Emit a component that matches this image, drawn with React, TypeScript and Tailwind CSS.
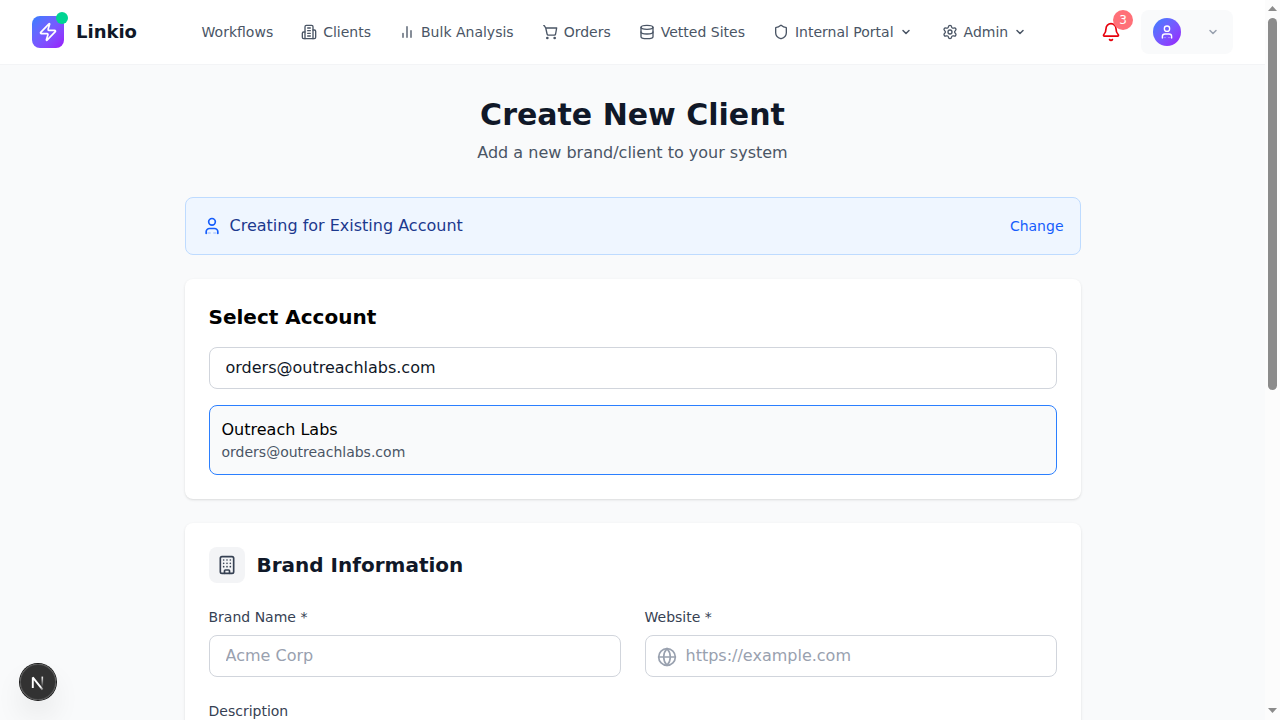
import type { ReactNode } from 'react';
import { Bell, Building, ChevronDown, Database, Globe, Settings, Shield, Zap } from 'lucide-react';

function Glyph({ children, size = 16, className = '' }: { children: ReactNode; size?: number; className?: string }) {
  return (
    <svg width={size} height={size} viewBox="0 0 24 24" fill="none" stroke="currentColor" strokeWidth="2" strokeLinecap="round" strokeLinejoin="round" className={className}>
      {children}
    </svg>
  );
}

const OfficeIcon = () => (
  <Glyph>
    <path d="M6 22V4a2 2 0 0 1 2-2h8a2 2 0 0 1 2 2v18Z" />
    <path d="M6 12H4a2 2 0 0 0-2 2v6a2 2 0 0 0 2 2h2" />
    <path d="M18 9h2a2 2 0 0 1 2 2v9a2 2 0 0 1-2 2h-2" />
    <path d="M10 6h4M10 10h4M10 14h4M10 18h4" />
  </Glyph>
);

const BarsIcon = () => (
  <Glyph>
    <path d="M18 20V10M12 20V4M6 20v-6" />
  </Glyph>
);

const CartIcon = () => (
  <Glyph>
    <circle cx="8" cy="21" r="1" />
    <circle cx="19" cy="21" r="1" />
    <path d="M2.6 2.4h.8L5.6 6l2 9a2 2 0 0 0 2 1.6h8.8a2 2 0 0 0 2-1.6L22 6H6" />
  </Glyph>
);

function PersonIcon({ size, className }: { size: number; className?: string }) {
  return (
    <Glyph size={size} className={className}>
      <path d="M19 21v-2a4 4 0 0 0-4-4H9a4 4 0 0 0-4 4v2" />
      <path d="M7 20.4h3M14 20.4h3" strokeWidth="1.2" opacity="0.4" />
      <circle cx="12" cy="7" r="4" />
    </Glyph>
  );
}

function NavItem({ icon, label, menu }: { icon?: ReactNode; label: string; menu?: boolean }) {
  return (
    <a className="flex items-center gap-1.5 whitespace-nowrap rounded-lg px-3 py-2 text-sm font-medium text-gray-600">
      {icon}
      {label}
      {menu && <ChevronDown size={12} strokeWidth={3} className="mr-0.5" />}
    </a>
  );
}

function Header() {
  return (
    <header className="flex h-[65px] items-center border-b border-gray-100 bg-white px-8">
      <div className="flex w-[157.6px] items-center gap-3">
        <div className="relative flex size-8 items-center justify-center rounded-lg bg-gradient-to-br from-blue-500 to-purple-600">
          <Zap size={20} className="text-white" />
          <span className="absolute -right-1 -top-1 size-3 rounded-full bg-[#00d492]" />
        </div>
        <span className="text-lg font-bold text-gray-900">Linkio</span>
      </div>
      <nav className="flex items-center gap-1">
        <NavItem label="Workflows" />
        <NavItem label="Clients" icon={<OfficeIcon />} />
        <NavItem label="Bulk Analysis" icon={<BarsIcon />} />
        <NavItem label="Orders" icon={<CartIcon />} />
        <NavItem label="Vetted Sites" icon={<Database size={16} />} />
        <NavItem label="Internal Portal" icon={<Shield size={16} />} menu />
        <NavItem label="Admin" icon={<Settings size={16} />} menu />
      </nav>
      <div className="ml-auto flex items-center gap-5">
        <button className="relative text-red-600">
          <Bell size={20} />
          <span className="absolute -right-3 -top-3 flex size-5 items-center justify-center rounded-full bg-[#ff7078] text-xs font-medium text-white">3</span>
        </button>
        <button className="flex h-11 w-[92px] items-center justify-between rounded-lg bg-gray-50 px-3">
          <span className="flex size-7 items-center justify-center rounded-full bg-gradient-to-br from-blue-500 to-purple-600 text-white">
            <PersonIcon size={16} />
          </span>
          <ChevronDown size={12} strokeWidth={3} className="mr-0.5 text-gray-400" />
        </button>
      </div>
    </header>
  );
}

const field = 'h-[42px] w-full rounded-lg border border-gray-300 bg-white pb-0.5 text-base text-gray-900 outline-none placeholder:text-gray-400';

export default function App() {
  return (
    <div className="flex h-[720px] overflow-hidden bg-gray-50 font-['DejaVu_Sans',sans-serif] text-black">
      <div className="h-[720px] w-[1265px] shrink-0 overflow-hidden">
        <Header />
        <main className="mx-auto w-[896px] pt-8">
          <div className="mb-8 text-center">
            <h1 className="mb-2 text-3xl font-bold text-gray-900">Create New Client</h1>
            <p className="text-gray-600">Add a new brand/client to your system</p>
          </div>

          <div className="mb-6 flex items-center justify-between rounded-lg border border-blue-200 bg-blue-50 p-4">
            <div className="flex items-center gap-2">
              <PersonIcon size={20} className="text-blue-600" />
              <span className="font-medium text-blue-900">Creating for Existing Account</span>
            </div>
            <button className="text-sm text-blue-600">Change</button>
          </div>

          <section className="mb-6 rounded-lg bg-white p-6 shadow-sm">
            <h2 className="mb-4 text-xl font-bold">Select Account</h2>
            <input className={`${field} mb-4 block px-4`} defaultValue="orders@outreachlabs.com" />
            <div className="rounded-lg border border-blue-500 bg-gray-50 p-3">
              <div className="font-medium">Outreach Labs</div>
              <div className="text-sm text-gray-600">orders@outreachlabs.com</div>
            </div>
          </section>

          <section className="rounded-lg bg-white p-6 shadow-sm">
            <div className="mb-6 flex items-center gap-3">
              <div className="flex size-9 items-center justify-center rounded-lg bg-gray-100 text-gray-700">
                <Building size={20} />
              </div>
              <h2 className="text-xl font-bold text-gray-900">Brand Information</h2>
            </div>
            <div className="mb-6 grid grid-cols-2 gap-6">
              <div>
                <label className="mb-2 block text-sm font-medium text-gray-700">Brand Name *</label>
                <input className={`${field} block px-4`} placeholder="Acme Corp" />
              </div>
              <div>
                <label className="mb-2 block text-sm font-medium text-gray-700">Website *</label>
                <div className="relative">
                  <Globe size={20} className="absolute left-3 top-3 text-gray-400" />
                  <input className={`${field} block pl-10 pr-4`} placeholder="https://example.com" />
                </div>
              </div>
            </div>
            <label className="mb-2 block text-sm font-medium text-gray-700">Description</label>
            <textarea className="block h-24 w-full rounded-lg border border-gray-300" />
          </section>
        </main>
      </div>

      <div className="flex h-[720px] w-[15px] shrink-0 flex-col items-center bg-[#fcfcfc] pb-[7px] pt-1.5">
        <svg width="9" height="5" viewBox="0 0 9 5" className="shrink-0 fill-[#8b8b8b]">
          <path d="M4.5 0L9 5H0Z" />
        </svg>
        <div className="mt-[7px] h-[372px] w-[9px] shrink-0 rounded-full bg-[#8b8b8b]" />
        <svg width="9" height="5" viewBox="0 0 9 5" className="mt-auto shrink-0 fill-[#8b8b8b]">
          <path d="M0 0H9L4.5 5Z" />
        </svg>
      </div>

      <div className="absolute left-5 top-[664px] flex size-9 items-center justify-center rounded-full bg-black/80 shadow-[0_0_0_1px_#171717,inset_0_0_0_1px_rgba(255,255,255,0.14),0_16px_32px_-8px_rgba(0,0,0,0.24)]">
        <svg width="40" height="40" viewBox="0 0 40 40" fill="none" className="shrink-0">
          <defs>
            <linearGradient id="diag" x1="18" y1="18" x2="26" y2="29" gradientUnits="userSpaceOnUse">
              <stop stopColor="white" />
              <stop offset="0.6" stopColor="white" />
              <stop offset="1" stopColor="white" stopOpacity="0" />
            </linearGradient>
            <linearGradient id="stem" x1="24.5" y1="14" x2="24.5" y2="25" gradientUnits="userSpaceOnUse">
              <stop stopColor="white" />
              <stop offset="1" stopColor="white" stopOpacity="0" />
            </linearGradient>
          </defs>
          <path d="M14.8 26V15.4L24.6 27.6" stroke="url(#diag)" strokeWidth="1.9" strokeLinejoin="bevel" />
          <path d="M24.3 14.6V25" stroke="url(#stem)" strokeWidth="1.6" />
        </svg>
      </div>
    </div>
  );
}
